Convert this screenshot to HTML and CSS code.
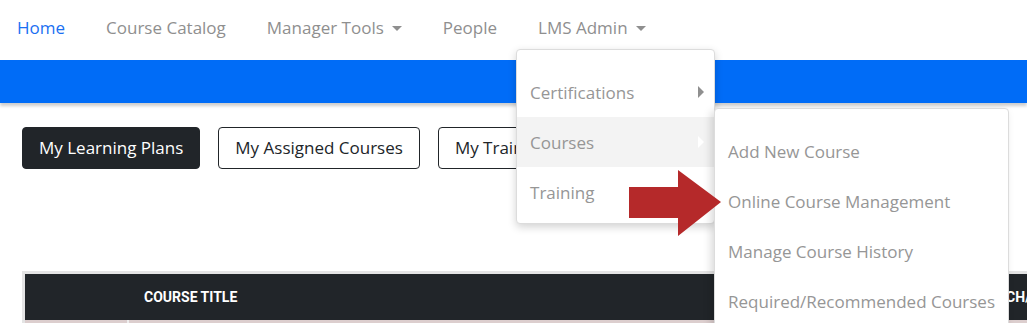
FILE: index.html
```html
<!DOCTYPE html>
<html lang="en">
<head>
  <meta charset="UTF-8">
  <title>LMS Admin</title>
  <link rel="stylesheet" href="styles.css">
</head>
<body>

  <nav class="topnav">
    <a class="nav-link active" href="#">Home</a>
    <a class="nav-link" href="#">Course Catalog</a>
    <a class="nav-link caret" href="#">Manager Tools</a>
    <a class="nav-link" href="#">People</a>
    <div class="nav-drop">
      <a class="nav-link caret" href="#">LMS Admin</a>

      <ul class="menu">
        <li><a href="#">Certifications <span class="sub-caret"></span></a></li>
        <li class="open">
          <a href="#">Courses <span class="sub-caret light"></span></a>
          <ul class="menu submenu">
            <li><a href="#">Add New Course</a></li>
            <li><a href="#">Online Course Management</a></li>
            <li><a href="#">Manage Course History</a></li>
            <li><a href="#">Required/Recommended Courses</a></li>
          </ul>
        </li>
        <li><a href="#">Training</a></li>
      </ul>
    </div>
  </nav>

  <div class="banner"></div>

  <main class="content">
    <div class="tabs">
      <button class="tab dark">My Learning Plans</button>
      <button class="tab">My Assigned Courses</button>
      <button class="tab">My Training History</button>
    </div>

    <div class="table-wrap">
      <table class="courses">
        <thead>
          <tr>
            <th class="col-img"></th>
            <th class="col-title">Course Title</th>
            <th class="col-launch">Launch/View</th>
          </tr>
        </thead>
        <tbody>
          <tr>
            <td></td>
            <td></td>
            <td></td>
          </tr>
        </tbody>
      </table>
    </div>
  </main>

  <svg class="pointer" width="96" height="70" viewBox="0 0 96 70">
    <polygon points="0,17 49,17 49,0 92,32 49,66 49,48 0,48" fill="#b5292a"/>
  </svg>

</body>
</html>
```

FILE: styles.css
```css
body {
  margin: 0;
  font-family: "Open Sans", sans-serif;
  background: #fff;
  overflow: hidden;
}

.topnav {
  display: flex;
  align-items: center;
  height: 55px;
  padding: 0 0 5px 17px;
  gap: 0 41px;
}
.nav-link {
  color: #8f8f8f;
  text-decoration: none;
  font-size: 17px;
}
.nav-link.active {
  color: #1a6ff2;
}
.nav-link.caret::after {
  content: "";
  display: inline-block;
  margin-left: 8px;
  vertical-align: 3px;
  border-top: 5px solid #8f8f8f;
  border-left: 5px solid transparent;
  border-right: 5px solid transparent;
}

.nav-drop {
  position: relative;
}

.menu {
  list-style: none;
  margin: 0;
  padding: 17px 0 6px;
  background: #fff;
  border: 1px solid #dcdcdc;
  border-radius: 4px;
  box-shadow: 0 3px 8px rgba(0,0,0,0.18);
}
.nav-drop > .menu {
  position: absolute;
  top: 33px;
  left: -22px;
  width: 197px;
  z-index: 5;
}
.menu li {
  position: relative;
}
.menu a {
  display: flex;
  align-items: center;
  justify-content: space-between;
  height: 50px;
  padding: 0 10px 0 13px;
  color: #969696;
  font-size: 17px;
  text-decoration: none;
}
.menu li.open > a {
  background: #f3f3f3;
}
.sub-caret {
  border-left: 6px solid #8f8f8f;
  border-top: 6px solid transparent;
  border-bottom: 6px solid transparent;
}
.sub-caret.light {
  border-left-color: #fff;
}
.submenu {
  position: absolute;
  top: -9px;
  left: 197px;
  width: 293px;
  height: 220px;
  border-radius: 4px 4px 0 0;
  box-shadow: -3px 3px 8px rgba(0,0,0,0.15);
}

.banner {
  height: 43px;
  background: #006cf7;
  box-shadow: 0 3px 3px rgba(0,0,0,0.2);
}

.content {
  padding: 24px 0 0 22px;
}
.tabs {
  display: flex;
  gap: 18px;
}
.tab {
  height: 42px;
  padding: 0 16px 2px;
  background: #fff;
  border: 1px solid #212529;
  border-radius: 4px;
  color: #212529;
  font-family: "Open Sans", sans-serif;
  font-size: 17px;
  white-space: nowrap;
}
.tab.dark {
  background: #212529;
  color: #fff;
}

.table-wrap {
  margin-top: 102px;
  border: 3px solid #e4e4e4;
  border-right: 0;
  border-bottom: 0;
  width: 1100px;
}
.courses {
  width: 100%;
  border-collapse: collapse;
}
.courses th {
  height: 46px;
  background: #212529;
  color: #fff;
  font-family: Roboto, sans-serif;
  font-size: 14px;
  font-weight: bold;
  text-transform: uppercase;
  text-align: left;
  padding: 0;
}
.courses .col-img {
  width: 103px;
}
.courses .col-title {
  padding-left: 16px;
  width: 826px;
}
.courses td {
  height: 20px;
  background: #dccece;
  border-right: 2px solid #eee;
}

.pointer {
  position: absolute;
  left: 629px;
  top: 170px;
  z-index: 10;
}
```
